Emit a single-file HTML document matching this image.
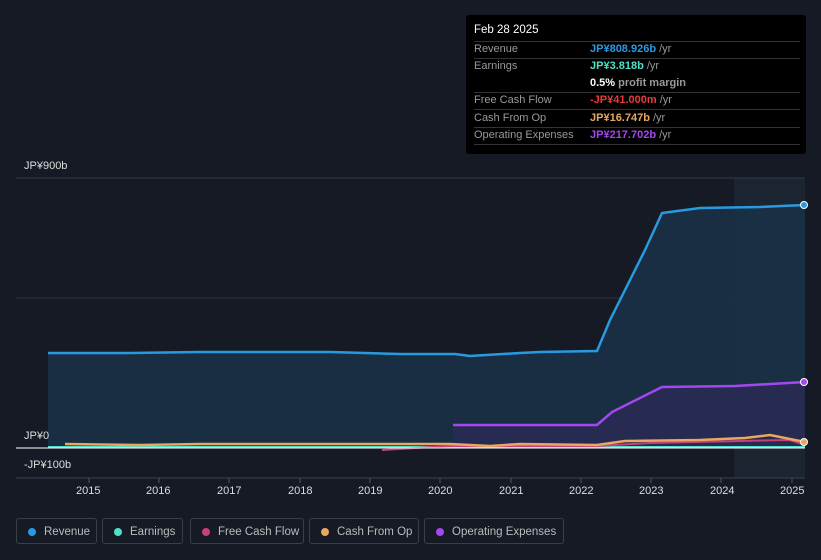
<!DOCTYPE html><html><head><style>
body{margin:0;width:821px;height:560px;background:#151a24;font-family:"Liberation Sans",sans-serif;overflow:hidden;position:relative}
.tt{position:absolute;left:466px;top:15px;width:340px;height:139px;background:#000;border-radius:3px;font-size:11px}
.r{position:absolute;left:8px;right:6px;border-top:1px solid #333}
.l{position:absolute;left:8px;color:#999}
.v{position:absolute;left:124px;font-weight:bold}
.lg{position:absolute;top:518px;height:26px;border:1px solid #3a3f48;border-radius:3px;color:#bbb;font-size:11.5px;line-height:26px;box-sizing:border-box;padding-left:27px}
.lg i{position:absolute;left:11px;top:9px;width:8px;height:8px;border-radius:50%}
.ax{position:absolute;color:#ddd;font-size:11px}
</style></head><body>
<svg width="821" height="560" style="position:absolute;left:0;top:0">
<rect x="734" y="178" width="71" height="300" fill="#1b2531"/>
<line x1="16" y1="178" x2="805" y2="178" stroke="#333a45"/>
<line x1="16" y1="298" x2="805" y2="298" stroke="#2a303b"/>
<line x1="16" y1="478" x2="805" y2="478" stroke="#3a404a"/>
<path d="M48 353 L130 353 L200 352 L330 352 L400 354 L455 354 L470 356 L520 353 L540 352 L597 351 L610 320 L645 250 L662 213 L700 208 L760 207 L805 205 L805 448 L48 448Z" fill="#1a3146" opacity="0.9"/>
<path d="M48 353 L130 353 L200 352 L330 352 L400 354 L455 354 L470 356 L520 353 L540 352 L597 351 L610 320 L645 250 L662 213 L700 208 L760 207 L805 205" fill="none" stroke="#2a9ae0" stroke-width="2.5"/>
<path d="M453 425 L597 425 L612 412 L662 387 L735 386 L805 382 L805 448 L453 448Z" fill="#2c2a55" opacity="0.8"/>
<path d="M453 425 L597 425 L612 412 L662 387 L735 386 L805 382" fill="none" stroke="#a347f0" stroke-width="2.5"/>
<path d="M48 447 L805 447" stroke="#50e0c8" stroke-width="2"/>
<path d="M382 450 L450 446 L520 446 L597 446 L650 443 L740 441 L790 440 L805 445" fill="none" stroke="#c8407a" stroke-width="2"/>
<path d="M65 444 L140 445 L200 444 L330 444 L450 444 L490 446 L520 444 L597 445 L625 441 L700 440 L745 438 L770 435 L805 442" fill="none" stroke="#e8a860" stroke-width="2.5"/>
<line x1="16" y1="448" x2="805" y2="448" stroke="#fff" stroke-width="1"/>
<circle cx="804" cy="205" r="3.5" fill="#2a9ae0" stroke="#fff"/>
<circle cx="804" cy="382" r="3.5" fill="#a347f0" stroke="#fff"/>
<circle cx="804" cy="442" r="3.5" fill="#e8a860" stroke="#fff"/>
<g stroke="#555" ><line x1="89" y1="478" x2="89" y2="483"/><line x1="159" y1="478" x2="159" y2="483"/><line x1="229" y1="478" x2="229" y2="483"/><line x1="300" y1="478" x2="300" y2="483"/><line x1="370" y1="478" x2="370" y2="483"/><line x1="440" y1="478" x2="440" y2="483"/><line x1="511" y1="478" x2="511" y2="483"/><line x1="581" y1="478" x2="581" y2="483"/><line x1="651" y1="478" x2="651" y2="483"/><line x1="721" y1="478" x2="721" y2="483"/><line x1="792" y1="478" x2="792" y2="483"/></g>
</svg>
<div class="ax" style="left:24px;top:160px">JP¥900b</div>
<div class="ax" style="left:24px;top:430px">JP¥0</div>
<div class="ax" style="left:24px;top:459px">-JP¥100b</div>
<div class="ax" style="left:76px;top:485px">2015</div><div class="ax" style="left:146px;top:485px">2016</div><div class="ax" style="left:217px;top:485px">2017</div><div class="ax" style="left:288px;top:485px">2018</div><div class="ax" style="left:358px;top:485px">2019</div><div class="ax" style="left:428px;top:485px">2020</div><div class="ax" style="left:499px;top:485px">2021</div><div class="ax" style="left:569px;top:485px">2022</div><div class="ax" style="left:639px;top:485px">2023</div><div class="ax" style="left:710px;top:485px">2024</div><div class="ax" style="left:780px;top:485px">2025</div>
<div class="tt">
<div style="position:absolute;left:8px;top:9px;color:#fff;font-size:11.5px">Feb 28 2025</div>
<div class="r" style="top:26px"></div>
<div class="l" style="top:28px">Revenue</div><div class="v" style="top:28px;color:#2a9ae0">JP¥808.926b <span style="color:#999;font-weight:normal">/yr</span></div>
<div class="r" style="top:43px"></div>
<div class="l" style="top:45px">Earnings</div><div class="v" style="top:45px;color:#50e0c8">JP¥3.818b <span style="color:#999;font-weight:normal">/yr</span></div>
<div class="v" style="top:62px;color:#fff">0.5% <span style="color:#999">profit margin</span></div>
<div class="r" style="top:77px"></div>
<div class="l" style="top:79px">Free Cash Flow</div><div class="v" style="top:79px;color:#e83a3a">-JP¥41.000m <span style="color:#999;font-weight:normal">/yr</span></div>
<div class="r" style="top:94px"></div>
<div class="l" style="top:97px">Cash From Op</div><div class="v" style="top:97px;color:#e8a860">JP¥16.747b <span style="color:#999;font-weight:normal">/yr</span></div>
<div class="r" style="top:112px"></div>
<div class="l" style="top:114px">Operating Expenses</div><div class="v" style="top:114px;color:#a347f0">JP¥217.702b <span style="color:#999;font-weight:normal">/yr</span></div>
<div class="r" style="top:129px"></div>
</div>
<div class="lg" style="left:16px;width:81px"><i style="background:#2a9ae0"></i>Revenue</div>
<div class="lg" style="left:102px;width:81px"><i style="background:#50e0c8"></i>Earnings</div>
<div class="lg" style="left:190px;width:114px"><i style="background:#c8407a"></i>Free Cash Flow</div>
<div class="lg" style="left:309px;width:110px"><i style="background:#e8a860"></i>Cash From Op</div>
<div class="lg" style="left:424px;width:140px"><i style="background:#a347f0"></i>Operating Expenses</div>
</body></html>
